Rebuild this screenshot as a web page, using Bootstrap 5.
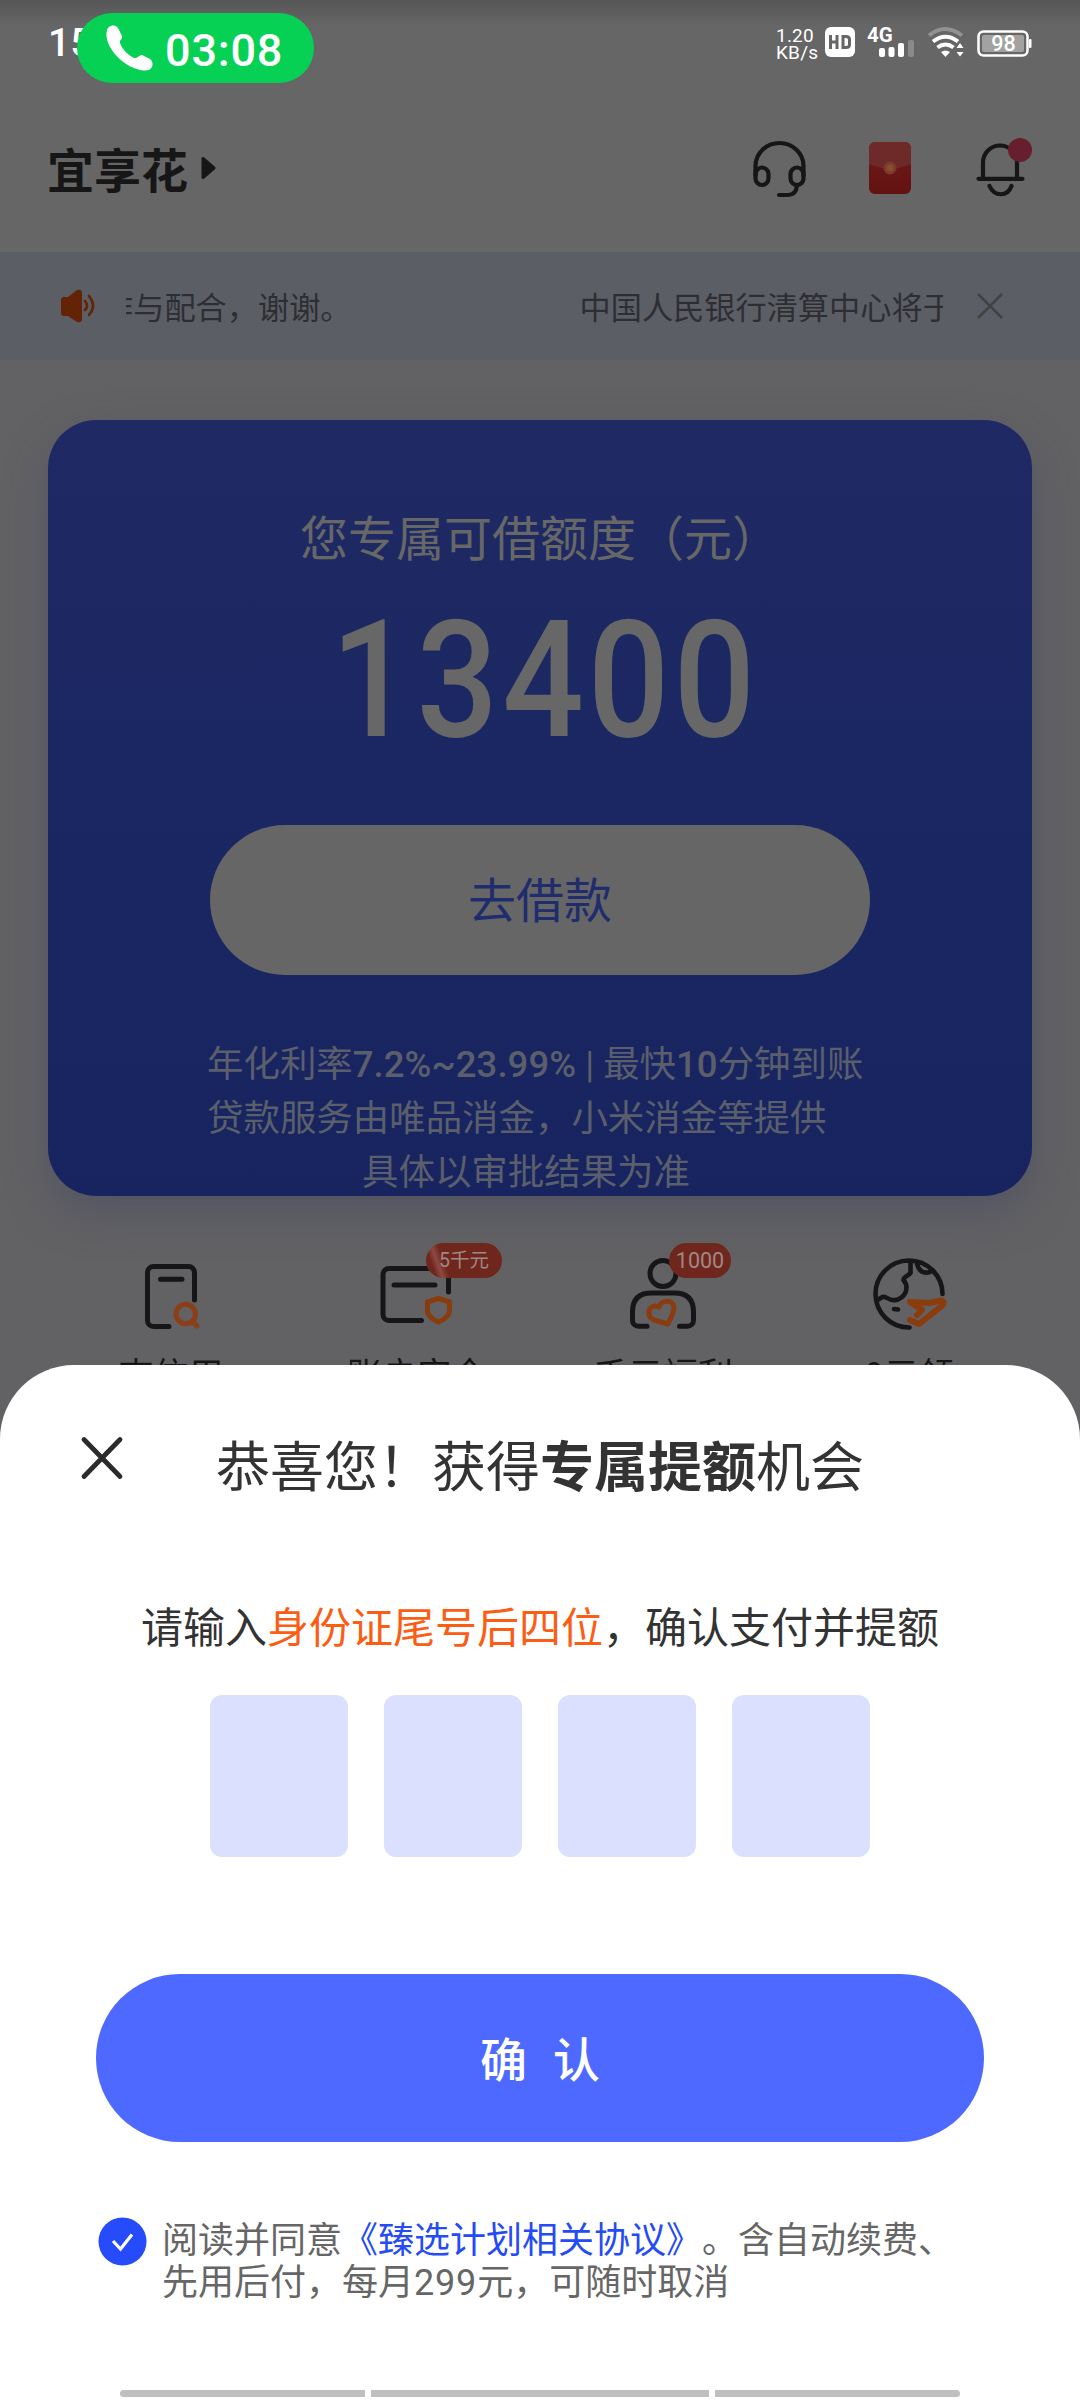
<!DOCTYPE html>
<html lang="zh-CN">
<head>
<meta charset="utf-8">
<meta name="viewport" content="width=device-width, initial-scale=1">
<title>宜享花</title>
<link href="https://cdn.jsdelivr.net/npm/bootstrap@5.3.0/dist/css/bootstrap.min.css" rel="stylesheet">
<style>
  body { margin: 0; background: #626264; font-family: Roboto, "Noto Sans CJK SC", sans-serif; color: #161616; }
  svg { display: block; flex: none; overflow: visible; }
  .phone { width: 1080px; height: 2400px; }
  .topzone { background: linear-gradient(#565656, #666 26px); height: 252px; }
  .statusbar { height: 84px; padding: 27px 48px 0 48px; color: #fff; }
  .clock { font-size: 39px; line-height: 32px; font-weight: 500; }
  .callpill { left: 77px; top: 13px; width: 237px; height: 70px; background: #07d154; padding-left: 29px; color: #fff; font-size: 45px; font-weight: 500; letter-spacing: .8px; line-height: 70px; }
  .callpill span { padding-top: 3px; margin-left: 13px; }
  .speed { font-size: 19px; line-height: 17px; letter-spacing: .2px; width: 49px; }
  .navtitle { font: 700 47px/60px "Noto Sans CJK SC", sans-serif; }
  .apphead { height: 168px; padding: 0 49px 0 47px; }
  .notice { height: 108px; background: #5c5e66; padding: 0 77px 0 60px; }
  .ticker { width: 817px; height: 50px; margin-left: 30px; font: 400 31.2px/50px "Noto Sans CJK SC", sans-serif; color: #2e2e32; }
  .tickertrack { margin-left: -24px; gap: 228px; }
  .quota { margin: 60px 48px 0; height: 776px; border-radius: 48px; background: linear-gradient(#1f2a64, #172460); box-shadow: 0 18px 44px rgba(64,66,100,.4); color: #676767; padding-top: 88px; }
  .quota-label { font-size: 48px; line-height: 64px; }
  .amount { font-size: 164px; font-weight: 500; line-height: 164px; letter-spacing: 4.6px; transform: scaleX(.876); margin: 26px 0 0 10px; }
  .borrow { width: 660px; height: 150px; margin-top: 63px; background: #666; color: #1f2c6d; font-size: 48px; font-weight: 400; padding: 4px 0 0; }
  .borrow:hover { background: #666; color: #1f2c6d; }
  .terms { width: 666px; margin-left: 159px; margin-top: 63px; font-size: 36.45px; line-height: 54px; color: #5b5f6c; }
  .terms b { font-weight: 500; letter-spacing: .1px; }
  .terms-last { margin-right: 28px; }
  .tiles { margin: 58px 48px 0; }
  .tile-label { font: 400 35px/44px "Noto Sans CJK SC", sans-serif; margin-top: 17px; }
  .tag { top: -11px; height: 35px; border-radius: 18px; background: #6f261c; color: #a08884; line-height: 35px; text-align: center; }
  .tag-a { left: 132px; width: 76px; font-size: 19.5px; background: linear-gradient(70deg, #6f261c 12%, #8c4a42 19%, #6f261c 27%); }
  .tag-b { left: 129px; width: 62px; font-size: 21.5px; }
  .sheet { left: 0; top: 1365px; width: 1080px; height: 1035px; background: #fff; border-radius: 74px 74px 0 0; color: #333; }
  .sheet-title { font-size: 54px; line-height: 72px; padding-top: 68px; }
  .sheet-close { left: 80px; top: 70px; }
  .sheet-hint { font-size: 42px; line-height: 60px; margin-top: 94px; }
  .sheet-hint span { color: #fa5d13; }
  .pins { gap: 36px; margin-top: 36px; }
  .pins i { width: 138px; height: 162px; border-radius: 12px; background: #dbe0ff; }
  .confirm { width: 888px; height: 168px; margin-top: 117px; background: #4d69ff; color: #fff; font-size: 47px; font-weight: 500; gap: 26px; padding: 6px 0 0; }
  .confirm:hover { background: #4d69ff; color: #fff; }
  .agree { margin: 75px 0 0 98px; font-size: 36px; line-height: 42px; color: #666; }
  .agree p { margin: 3px 0 0 15px; }
  .agree span { display: inline-block; }
  .agree .pact { color: #254bf5; }
  .agree .price { letter-spacing: .8px; }
  .navbars { left: 120px; bottom: 3px; gap: 6px; }
  .navbars i { height: 7px; background: #bfbfbf; }
</style>
</head>
<body>
<div class="phone position-relative overflow-hidden">

  <div class="topzone">
    <div class="statusbar d-flex align-items-start">
      <div class="clock">15</div>
      <div class="d-flex ms-auto align-items-start">
        <div class="speed">1.20<br>KB/s</div>
        <svg width="30" height="30" viewBox="0 0 30 30"><rect width="30" height="30" rx="6" fill="#fff"/><path d="M5.500 8v14M12 8v14M5.500 15H12M18 9.500h3q3.500 0 3.500 3v5q0 3-3.500 3h-3z" fill="none" stroke="#666" stroke-width="3"/></svg>
        <svg class="ms-2" width="54" height="32" viewBox="0 0 54 32"><text x="4" y="15" font-family="Roboto" font-weight="700" font-size="20.500" fill="#fff">4G</text><g fill="#fff"><rect x="16" y="21" width="6" height="9" rx="2"/><rect x="25.500" y="20" width="6" height="10" rx="2"/><rect x="35" y="16" width="6" height="14" rx="2"/></g><rect x="45" y="13" width="6" height="17" rx="2" fill="#8a8a8a"/></svg>
        <svg style="margin-left:10px" width="38" height="31" viewBox="0 0 38 31"><g fill="none" stroke="#fff" stroke-width="4"><path d="M2 8.500Q18 -4.500 35 8.500" stroke="#929292"/><path d="M6 14.500Q18.500 5 31 14.500"/><path d="M10.500 20.500Q18.500 14.500 26.500 20.500"/></g><path d="M14 25q4.500-3 9 0l-4.500 5zM29.500 21l3.500-5 3.500 5zM29.500 25h7L33 29.500z" fill="#fff"/></svg>
        <svg style="margin-left:12px" width="55" height="31" viewBox="0 0 55 31"><rect x="1.500" y="4.500" width="49" height="24" rx="5" fill="none" stroke="#fff" stroke-width="2.500"/><rect x="5" y="8" width="42" height="17" rx="2" fill="#a2a2a2"/><rect x="52" y="12" width="2.500" height="9" rx="1" fill="#fff"/><text x="26.500" y="24" text-anchor="middle" font-family="Roboto" font-weight="500" font-size="21.500" fill="#fff">98</text></svg>
      </div>
    </div>
    <header class="apphead d-flex align-items-center">
      <div class="navtitle">宜享花</div>
      <svg style="margin-left:13px" width="15" height="24" viewBox="0 0 15 24"><path d="M2 2.500v19L13 12z" fill="#161616" stroke="#161616" stroke-width="3" stroke-linejoin="round"/></svg>
      <div class="d-flex ms-auto align-items-center" style="gap:60px">
        <svg width="60" height="66" viewBox="0 -1.500 60 66" fill="none" stroke="#161616" stroke-width="4.200" stroke-linecap="round"><path d="M6.500 39V29.500a24 23 0 0 1 48 0V39"/><rect x="6.500" y="31" width="13" height="17.500" rx="6.500"/><rect x="41.500" y="31" width="13" height="17.500" rx="6.500"/><path d="M48 49q-1 9.500-9 9.500h-9"/></svg>
        <svg width="42" height="52" viewBox="0 0 42 52"><defs><linearGradient id="env" x2="0" y2="1"><stop stop-color="#6d1b1b"/><stop offset="1" stop-color="#631211"/></linearGradient></defs><rect width="42" height="52" rx="6" fill="url(#env)"/><path d="M0 22V6a6 6 0 0 1 6-6h30a6 6 0 0 1 6 6v16q-21 9-42 0z" fill="#6d2a28"/><circle cx="21" cy="26" r="6.500" fill="#7d3a2d"/><circle cx="21" cy="26" r="3.500" fill="#85502d"/></svg>
        <svg width="60" height="66" viewBox="0 -1.500 60 66" fill="none" stroke="#161616" stroke-width="4.200" stroke-linecap="round"><path d="M12 41V26a17 17 0 0 1 34 0v15M7.500 42.300h44M18.500 49.500c5 11 18 11 22 0"/><circle cx="49" cy="13.500" r="12" fill="#681f2d" stroke="none"/></svg>
      </div>
    </header>
  </div>
  <div class="callpill position-absolute rounded-pill d-flex">
    <svg style="margin-top:12px" width="46" height="46" viewBox="0 0 46 46"><path d="M1 5C2 1 9-2 12 3l4 8c1 3-3 4-2 7 2 6 8 12 14 15 3 1 5-3 8-3l8 4c4 3 3 9-1 11C24 49-4 23 1 5z" fill="#fff"/></svg>
    <span>03:08</span>
  </div>

  <div class="notice d-flex align-items-center">
    <svg width="36" height="36" viewBox="0 0 36 36"><path d="M4 9h4l9-7q5-1 5 3v26q0 4-5 3l-9-6H4q-3 0-3-3V12q0-3 3-3z" fill="#642304"/><path d="M25 13q4 5 0 9M29 8q8 10 0 19" fill="none" stroke="#642304" stroke-width="2.600" stroke-linecap="round"/></svg>
    <div class="ticker overflow-hidden"><div class="tickertrack d-flex text-nowrap"><span>作与配合，谢谢。</span><span>中国人民银行清算中心将于</span></div></div>
    <svg class="ms-auto" width="26" height="26" viewBox="0 0 26 26"><path d="M1 1l24 24M25 1L1 25" stroke="#424144" stroke-width="2.500"/></svg>
  </div>

  <section class="quota text-center">
    <div class="quota-label">您专属可借额度（元）</div>
    <div class="amount">13400</div>
    <button class="borrow btn rounded-pill border-0">去借款</button>
    <div class="terms text-start text-nowrap">年化利率<b>7.2%~23.99%</b> | 最快<b>10</b>分钟到账<br>贷款服务由唯品消金，小米消金等提供<div class="terms-last text-center">具体以审批结果为准</div></div>
  </section>

  <div class="tiles row g-0 text-center">
    <div class="col-3 position-relative">
      <svg class="mx-auto" width="80" height="80" viewBox="0 0 80 80" fill="none" stroke="#161618" stroke-width="5" stroke-linecap="round"><path d="M63.500 46V18.500a6 6 0 0 0-6-6h-35a6 6 0 0 0-6 6v48a6 6 0 0 0 6 6H38M29.500 25.300H51"/><g stroke="#8b3e18"><circle cx="54.700" cy="60" r="9.700"/><path d="M62 68l4 4"/></g></svg>
      <div class="tile-label">查信用</div>
    </div>
    <div class="col-3 position-relative">
      <svg class="mx-auto" width="80" height="80" viewBox="0 0 80 80" fill="none" stroke="#161618" stroke-width="5" stroke-linecap="round"><path d="M71.500 38V20.500a6 6 0 0 0-6-6H12a6 6 0 0 0-6 6v40a6 6 0 0 0 6 6H44.500M17 31H58"/><path d="M61.500 44.500l11 3.500v9q0 6-11 11-11-5-11-11v-9z" stroke="#8a3d0c" stroke-linejoin="round"/></svg>
      <div class="tag tag-a position-absolute">5千元</div>
      <div class="tile-label">账户安全</div>
    </div>
    <div class="col-3 position-relative">
      <svg class="mx-auto" width="80" height="80" viewBox="0 0 80 80" fill="none" stroke="#161618" stroke-width="5" stroke-linecap="round"><circle cx="40" cy="19.500" r="13"/><path d="M24 72.300h-8.500a6 6 0 0 1-6-6V58q0-19 19-19h23q19 0 19 19v8.300a6 6 0 0 1-6 6H56.500"/><path d="M45 70l-14-4c-8-3-6-14 1-14l4 1c2-7 14-8 15 0q0 5-6 17z" stroke="#8a3b10" stroke-linejoin="round"/></svg>
      <div class="tag tag-b position-absolute">1000</div>
      <div class="tile-label">千元福利</div>
    </div>
    <div class="col-3 position-relative">
      <svg class="mx-auto" width="80" height="80" viewBox="0 0 80 80" fill="none" stroke="#161618" stroke-width="4.600" stroke-linecap="round" stroke-linejoin="round"><path d="M73.500 40A33.500 33.500 0 1 0 40.500 73.500M41.500 9v10c-2 3-7 3-7 7q3 4 3 7c0 9-8 14-14 13-4 0-6-4-10-3l-5 3M48 10q3 11 13 8"/><path d="M25 55l4 .5"/><path d="M41 66l9 4L74 51q2-4-2-4.500L60 49l-19-1 12 8-5 5" stroke="#8c3b0d" stroke-width="6"/></svg>
      <div class="tile-label">0元领</div>
    </div>
  </div>

  <section class="sheet position-absolute text-center">
    <svg class="sheet-close position-absolute" width="44" height="44" viewBox="0 0 44 44"><path d="M4 4.500l36 37M40 4.500L4 41.500" stroke="#2b2b2b" stroke-width="4.800" stroke-linecap="round"/></svg>
    <div class="sheet-title">恭喜您！获得<b>专属提额</b>机会</div>
    <div class="sheet-hint">请输入<span>身份证尾号后四位</span>，确认支付并提额</div>
    <div class="pins d-flex justify-content-center"><i></i><i></i><i></i><i></i></div>
    <button class="confirm btn rounded-pill border-0 d-inline-flex justify-content-center align-items-center"><span>确</span><span>认</span></button>
    <div class="agree d-flex text-start text-nowrap">
      <svg width="49" height="49" viewBox="0 0 49 49"><circle cx="24.500" cy="24.500" r="24" fill="#254bfa"/><path d="M15 24l7.500 8L34 17.500" fill="none" stroke="#fff" stroke-width="3.200"/></svg>
      <p>阅读并同意<span class="pact">《臻选计划相关协议》</span><span>。</span>含自动续费、<br>先用后付，每月<span class="price">299</span>元，可随时取消</p>
    </div>
    <div class="navbars position-absolute d-flex"><i class="rounded-start-pill" style="width:245px"></i><i style="width:338px"></i><i class="rounded-end-pill" style="width:245px"></i></div>
  </section>
</div>
<script src="https://cdn.jsdelivr.net/npm/bootstrap@5.3.0/dist/js/bootstrap.bundle.min.js"></script>
</body>
</html>
